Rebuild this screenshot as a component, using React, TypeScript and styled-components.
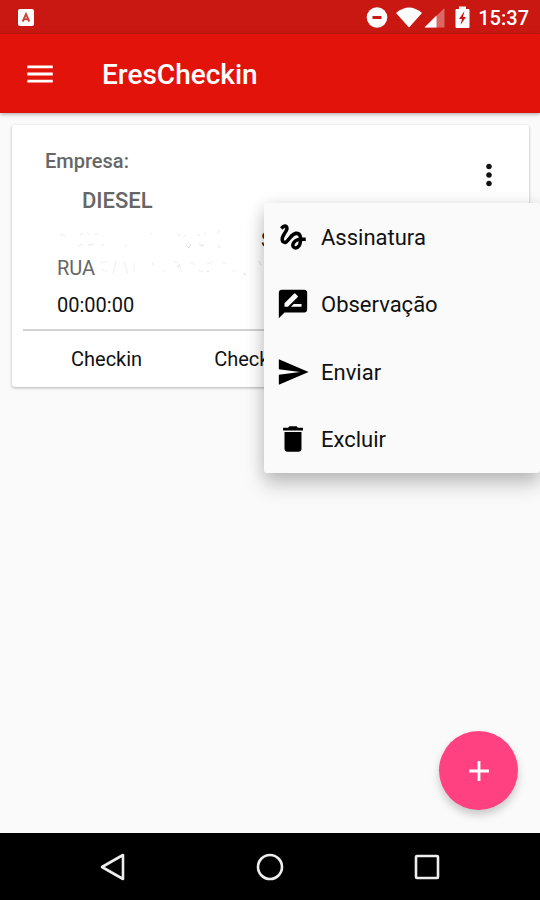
import React from "react";
import styled, { createGlobalStyle } from "styled-components";
import {
  MdAdd,
  MdDelete,
  MdGesture,
  MdMenu,
  MdMoreVert,
  MdRateReview,
  MdSend,
} from "react-icons/md";

const GlobalStyle = createGlobalStyle`
  * { box-sizing: border-box; }
  body { margin: 0; background: #fafafa; font-family: Roboto, sans-serif; }
  button { border: 0; padding: 0; background: none; font: inherit; color: inherit; cursor: pointer; }
`;

const Screen = styled.div`
  display: flex;
  flex-direction: column;
  min-height: 100vh;
`;

const StatusBar = styled.div`
  display: flex;
  align-items: center;
  justify-content: space-between;
  height: 34px;
  padding: 0 11px 0 18px;
  background: #c91712;
  color: #fff;
`;

const StatusGroup = styled.div`
  display: flex;
  align-items: center;
`;

const Clock = styled.time`
  margin-left: 6px;
  padding-top: 2px;
  font-size: 20px;
  line-height: 24px;
  font-weight: 500;
`;

const AppBar = styled.header`
  display: flex;
  align-items: center;
  gap: 45px;
  height: 79px;
  padding: 0 23px;
  background: #e2130b;
  color: #fff;
  box-shadow: 0 1px 4px rgba(0, 0, 0, 0.35);
`;

const IconButton = styled.button`
  display: flex;
  align-items: center;
  justify-content: center;
  width: 34px;
  height: 34px;
`;

const Title = styled.h1`
  margin: 0;
  padding-top: 2px;
  font-size: 28px;
  line-height: 32px;
  font-weight: 500;
`;

const Content = styled.main`
  position: relative;
  flex: 1;
  padding: 12px 11px 12px 12px;
`;

const Card = styled.article`
  padding: 24px 11px 0;
  border-radius: 3px;
  background: #fff;
  box-shadow: 0 1px 3px rgba(0, 0, 0, 0.3);
`;

const CardHead = styled.div`
  display: flex;
  justify-content: space-between;
  padding: 0 12px 0 22px;
`;

const Company = styled.div`
  color: #666;
  font-weight: 500;
`;

const CompanyLabel = styled.div`
  font-size: 20px;
  line-height: 24px;
`;

const CompanyName = styled.h2`
  margin: 14px 0 0 37px;
  font-size: 22px;
  line-height: 28px;
  font-weight: 500;
`;

const MoreArea = styled.div`
  padding-top: 9px;
  color: #111;
`;

const Details = styled.div`
  padding: 11px 0 0 34px;
  font-size: 20px;
  line-height: 28px;
`;

const Line = styled.div`
  display: flex;
  align-items: center;
  height: 28px;
  color: #666;
`;

const Suffix = styled.span`
  margin-left: 36px;
  color: #222;
`;

const Duration = styled.div`
  margin-top: 9px;
  color: #111;
`;

const Actions = styled.div`
  display: flex;
  align-items: center;
  gap: 72px;
  height: 58px;
  margin-top: 10px;
  padding-left: 48px;
  border-top: 2px solid #d2d2d2;
  font-size: 20px;
  line-height: 24px;
  color: #111;
`;

const Menu = styled.div`
  position: absolute;
  top: 90px;
  right: 0;
  display: grid;
  grid-auto-rows: 1fr;
  width: 276px;
  height: 270px;
  border-radius: 3px;
  background: #fafafa;
  color: #111;
  box-shadow: 0 12px 20px rgba(0, 0, 0, 0.2), 0 2px 16px rgba(0, 0, 0, 0.12);
`;

const MenuItem = styled.button`
  display: flex;
  align-items: center;
  gap: 11px;
  padding: 0 12px;
  font-size: 22px;
  line-height: 28px;
  text-align: left;

  svg { color: #000; }
`;

const MenuLabel = styled.span`
  padding-top: 2px;
`;

const Fab = styled.button`
  position: absolute;
  right: 22px;
  bottom: 23px;
  display: flex;
  align-items: center;
  justify-content: center;
  width: 79px;
  height: 79px;
  border-radius: 50%;
  background: #ff4081;
  color: #fff;
  box-shadow: 0 5px 9px rgba(0, 0, 0, 0.2);
`;

const NavBar = styled.nav`
  display: flex;
  align-items: center;
  justify-content: center;
  gap: 123px;
  height: 67px;
  background: #000;
`;

const menuItems = [
  { label: "Assinatura", Icon: MdGesture },
  { label: "Observação", Icon: MdRateReview },
  { label: "Enviar", Icon: MdSend },
  { label: "Excluir", Icon: MdDelete },
];

const NameTraces = () => (
  <svg width="168" height="20" viewBox="0 0 168 20" fill="none" stroke="#ececec" aria-hidden="true">
    <path d="M3 4l5 2M23 5l3-2M30 3l3 2M38 5l3-2M21 16l5-2M31 15l6-1M44 14l3 1M68 16l2-1M93 3l2 1M120 4l4 2M126 7l3-2M140 6l3-1M147 4l2-1M160 3l3-2" />
    <path d="M129 15l3 3 2-4M142 14l3 2 2-2M161 16l2 1" stroke="#dcdcdc" />
  </svg>
);

const AddressTraces = () => (
  <svg width="170" height="22" viewBox="0 0 170 22" fill="none" stroke="#efefef" aria-hidden="true">
    <path d="M5 6l6-1M7 12l6 3M21 4l-3 13M29 4l4 13M39 6v8M57 5l2 4M67 15l4-2M79 4l4 2M84 7l3 8M95 5l5 3M103 13l5 2M112 7l5-2M128 6l3 1M137 15l4-2" />
    <path d="M82 10l3-2M112 15l2-1M148 16l3 2M164 4l2 4" stroke="#dcdcdc" />
  </svg>
);

export default function App() {
  return (
    <>
      <GlobalStyle />
      <Screen>
        <StatusBar>
          <svg width="16" height="17" viewBox="0 0 16 17" aria-hidden="true">
            <rect width="16" height="17" rx="2" fill="#fff" />
            <path d="M4.7 12.5L8 5l3.3 7.5M6 10.2h4" fill="none" stroke="#c9443f" strokeWidth="1.9" />
          </svg>
          <StatusGroup>
            <svg width="106" height="24" viewBox="366 5 106 24" fill="#fff" aria-hidden="true">
              <circle cx="377" cy="17.5" r="10.3" />
              <path d="M372.5 16h9v3h-9z" fill="#c91712" />
              <path d="M396 13Q409 2 422 13L409 27.5z" />
              <path d="M444.5 8v19.5h-20z" opacity=".35" />
              <path d="M436.5 15.5v12h-12z" />
              <path d="M459 6.500h7v2.500h2.500q1 0 1 1v17q0 1-1 1h-12q-1 0-1-1V10q0-1 1-1h2.500z" />
              <path d="M464.500 11l-5.500 8h3l-1.500 6 5.500-8h-3z" fill="#c91712" />
            </svg>
            <Clock>15:37</Clock>
          </StatusGroup>
        </StatusBar>
        <AppBar>
          <IconButton aria-label="Menu"><MdMenu size={34} /></IconButton>
          <Title>EresCheckin</Title>
        </AppBar>
        <Content>
          <Card>
            <CardHead>
              <Company>
                <CompanyLabel>Empresa:</CompanyLabel>
                <CompanyName>DIESEL</CompanyName>
              </Company>
              <MoreArea>
                <IconButton aria-label="Mais opções" aria-expanded="true"><MdMoreVert size={34} /></IconButton>
              </MoreArea>
            </CardHead>
            <Details>
              <Line><NameTraces /><Suffix>S</Suffix></Line>
              <Line>RUA<AddressTraces /></Line>
              <Duration>00:00:00</Duration>
            </Details>
            <Actions>
              <button>Checkin</button>
              <button>Checkout</button>
            </Actions>
          </Card>
          <Menu role="menu">
            {menuItems.map(({ label, Icon }) => (
              <MenuItem key={label} role="menuitem">
                <Icon size={34} />
                <MenuLabel>{label}</MenuLabel>
              </MenuItem>
            ))}
          </Menu>
          <Fab aria-label="Adicionar"><MdAdd size={34} /></Fab>
        </Content>
        <NavBar>
          <IconButton aria-label="Voltar">
            <svg width="34" height="34" viewBox="0 0 34 34" fill="none" stroke="#eee" strokeWidth="2.6" strokeLinejoin="round">
              <path d="M27 5v24L6 17z" />
            </svg>
          </IconButton>
          <IconButton aria-label="Início">
            <svg width="34" height="34" viewBox="0 0 34 34" fill="none" stroke="#eee" strokeWidth="2.6">
              <circle cx="17" cy="17" r="12" />
            </svg>
          </IconButton>
          <IconButton aria-label="Recentes">
            <svg width="34" height="34" viewBox="0 0 34 34" fill="none" stroke="#eee" strokeWidth="2.6">
              <rect x="6" y="6" width="22" height="22" rx="1" />
            </svg>
          </IconButton>
        </NavBar>
      </Screen>
    </>
  );
}
